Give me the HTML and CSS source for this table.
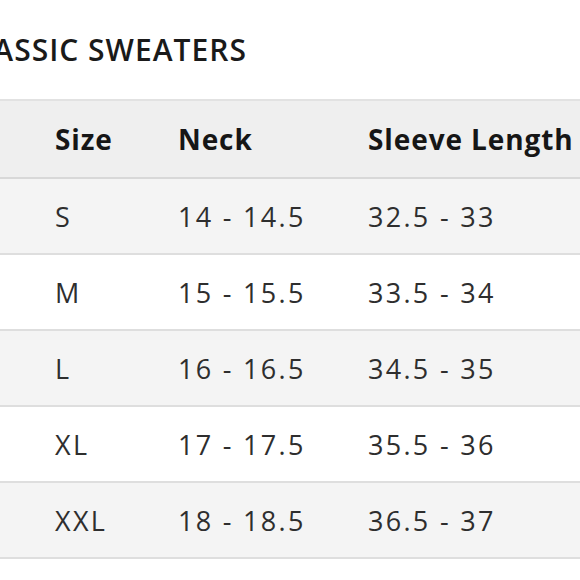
FILE: index.html
```html
<!DOCTYPE html>
<html>
<head>
<meta charset="utf-8">
<link rel="stylesheet" href="styles.css">
</head>
<body>
<div class="page">
  <h1 class="title">CLASSIC SWEATERS</h1>
  <div class="chart">
    <div class="row head">
      <div class="cell">Size</div>
      <div class="cell">Neck</div>
      <div class="cell">Sleeve Length</div>
    </div>
    <div class="row shade">
      <div class="cell">S</div>
      <div class="cell">14 - 14.5</div>
      <div class="cell">32.5 - 33</div>
    </div>
    <div class="row">
      <div class="cell">M</div>
      <div class="cell">15 - 15.5</div>
      <div class="cell">33.5 - 34</div>
    </div>
    <div class="row shade">
      <div class="cell">L</div>
      <div class="cell">16 - 16.5</div>
      <div class="cell">34.5 - 35</div>
    </div>
    <div class="row">
      <div class="cell">XL</div>
      <div class="cell">17 - 17.5</div>
      <div class="cell">35.5 - 36</div>
    </div>
    <div class="row shade">
      <div class="cell">XXL</div>
      <div class="cell">18 - 18.5</div>
      <div class="cell">36.5 - 37</div>
    </div>
  </div>
</div>
</body>
</html>
```

FILE: styles.css
```css
html, body {
  margin: 0;
  padding: 0;
  background: #ffffff;
  overflow: hidden;
}
.page {
  width: 580px;
  height: 580px;
  overflow: hidden;
  font-family: "Open Sans", "Noto Sans", sans-serif;
}
.title {
  margin: 0 0 0 -44px;
  padding-top: 31px;
  height: 68px;
  box-sizing: border-box;
  font-size: 30px;
  line-height: 38px;
  font-weight: 600;
  letter-spacing: 1px;
  color: #1a1a1a;
  white-space: nowrap;
}
.chart {
  margin-top: 31px;
  border-top: 2px solid #e2e2e2;
  width: 640px;
}
.row {
  display: grid;
  grid-template-columns: 178px 190px 1fr;
  height: 74px;
  align-items: center;
  border-bottom: 2px solid #dedede;
  background: #ffffff;
}
.row.shade {
  background: #f4f4f4;
}
.row.head {
  height: 76px;
  background: #efefef;
  border-bottom-color: #d8d8d8;
}
.cell {
  font-size: 27px;
  font-weight: 500;
  color: #2e2e2e;
  letter-spacing: 2.3px;
  white-space: nowrap;
}
.cell:first-child {
  padding-left: 55px;
}
.head .cell {
  font-size: 28px;
  font-weight: 700;
  color: #161616;
  letter-spacing: 0.9px;
}
```
